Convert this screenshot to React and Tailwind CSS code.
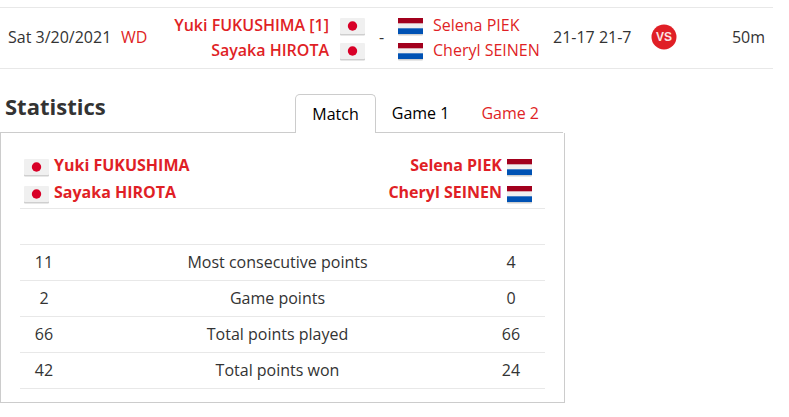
const match = {
  date: "Sat 3/20/2021",
  draw: "WD",
  score: "21-17 21-7",
  duration: "50m",
  home: [
    { name: "Yuki FUKUSHIMA", seed: "[1]", country: "JPN" },
    { name: "Sayaka HIROTA", country: "JPN" },
  ],
  away: [
    { name: "Selena PIEK", country: "NED" },
    { name: "Cheryl SEINEN", country: "NED" },
  ],
};

const stats = [
  { label: "Most consecutive points", home: 11, away: 4 },
  { label: "Game points", home: 2, away: 0 },
  { label: "Total points played", home: 66, away: 66 },
  { label: "Total points won", home: 42, away: 24 },
];

function Flag({ country }) {
  return (
    <svg viewBox="0 0 25 18" className="w-[25px] h-[18px] mt-1 shrink-0" role="img" aria-label={country}>
      <rect x="0" y="1" width="25" height="16.5" rx="1" fill="#cfcfcf" />
      {country === "JPN" ? (
        <>
          <rect width="25" height="16" rx="1" fill="#f0f0f0" />
          <circle cx="12.5" cy="8" r="4.7" fill="#d80027" />
        </>
      ) : (
        <>
          <rect width="25" height="16" fill="#f0f0f0" />
          <rect width="25" height="5.3" fill="#a2001d" />
          <rect y="10.3" width="25" height="5.7" fill="#0052b4" />
        </>
      )}
    </svg>
  );
}

function VersusIcon() {
  return (
    <svg viewBox="0 0 26 26" className="block size-[26px]" aria-hidden="true">
      <circle cx="13" cy="13" r="12.5" fill="#e01f26" />
      <text
        x="13"
        y="17"
        textAnchor="middle"
        fontFamily="Liberation Sans, sans-serif"
        fontSize="12"
        fontWeight="bold"
        fill="#fbe3e4"
      >
        VS
      </text>
    </svg>
  );
}

function MatchRow() {
  return (
    <div className="pt-[7px] pr-4">
      <table className="w-full table-fixed border-collapse border-y border-[#e8e8e8] text-[#333]">
        <tbody>
          <tr className="h-[61px]">
            <td className="w-[121px] pl-2 pb-0.5 whitespace-nowrap">{match.date}</td>
            <td className="w-9 pb-0.5">
              <a href="#draw" className="text-[#e01f26]">{match.draw}</a>
            </td>
            <td className="w-[208px] pb-0.5">
              {match.home.map((p) => (
                <div key={p.name} className="flex items-center justify-end gap-[11px] h-[25px] whitespace-nowrap">
                  <a href="#player" className="font-semibold text-[#e01f26]">
                    {p.name} {p.seed}
                  </a>
                  <Flag country={p.country} />
                </div>
              ))}
            </td>
            <td className="w-[33px] pb-0.5 text-center">-</td>
            <td className="w-[155px] pb-0.5">
              {match.away.map((p) => (
                <div key={p.name} className="flex items-center gap-2.5 h-[25px] whitespace-nowrap">
                  <Flag country={p.country} />
                  <a href="#player" className="text-[#e01f26]">{p.name}</a>
                </div>
              ))}
            </td>
            <td className="w-[98px] pb-0.5 whitespace-nowrap">{match.score}</td>
            <td className="w-10 pb-0.5">
              <a href="#h2h" aria-label="Head to head" className="block">
                <VersusIcon />
              </a>
            </td>
            <td className="pr-2 pb-0.5 text-right">{match.duration}</td>
          </tr>
        </tbody>
      </table>
    </div>
  );
}

function Statistics() {
  return (
    <section className="mt-6 max-w-[565px]">
      <div className="flex items-end justify-between border-b border-[#ccc] mr-0.5 pl-[5px]">
        <h2 className="text-[22px] leading-[26px] font-bold mb-[13px]">Statistics</h2>
        <div className="flex items-end -mb-px pr-2" role="tablist">
          <button
            role="tab"
            aria-selected="true"
            className="h-[39px] px-4 pb-px text-black bg-white border border-b-0 border-[#ccc] rounded-t-[5px]"
          >
            Match
          </button>
          <button role="tab" aria-selected="false" className="h-10 px-4 text-black">
            Game 1
          </button>
          <button role="tab" aria-selected="false" className="h-10 px-4 text-[#e01f26]">
            Game 2
          </button>
        </div>
      </div>

      <div className="border border-t-0 border-[#ccc] px-[19px] pt-[19px] pb-[13px]">
        <table className="w-full table-fixed border-collapse text-center">
          <colgroup>
            <col className="w-12" />
            <col />
            <col className="w-[68px]" />
          </colgroup>
          <thead>
            <tr className="border-b border-[#e8e8e8]">
              <th colSpan={3} className="pb-0.5 pl-1 pr-[13px]">
                {match.home.map((p, i) => (
                  <div key={p.name} className="flex items-center justify-between h-[27px]">
                    <span className="flex items-center gap-[5px]">
                      <Flag country={p.country} />
                      <a href="#player" className="pb-0.5 font-bold text-[#e01f26]">{p.name}</a>
                    </span>
                    <span className="flex items-center gap-[5px]">
                      <a href="#player" className="pb-0.5 font-bold text-[#e01f26]">{match.away[i].name}</a>
                      <Flag country={match.away[i].country} />
                    </span>
                  </div>
                ))}
              </th>
            </tr>
          </thead>
          <tbody>
            <tr className="h-9 border-b border-[#e8e8e8]">
              <td colSpan={3} />
            </tr>
            {stats.map((s) => (
              <tr key={s.label} className="h-9 border-b border-[#e8e8e8]">
                <td className="pb-0.5">{s.home}</td>
                <td className="pl-2.5 pb-0.5">{s.label}</td>
                <td className="pb-0.5">{s.away}</td>
              </tr>
            ))}
          </tbody>
        </table>
      </div>
    </section>
  );
}

export default function App() {
  return (
    <main className="bg-white text-base text-[#333] font-['Open_Sans',sans-serif]">
      <MatchRow />
      <Statistics />
    </main>
  );
}
